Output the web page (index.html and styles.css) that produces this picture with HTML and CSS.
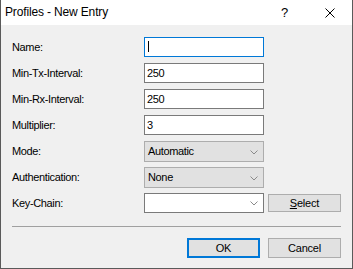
FILE: index.html
```html
<!DOCTYPE html>
<html lang="en">

<head>
  <title>Profiles - New Entry</title>
  <meta charset="utf-8">
  <link rel="stylesheet" href="styles.css">
</head>

<body>
  <div class="window">
    <div class="titlebar">
      <span class="title">Profiles - New Entry</span>
      <span class="capbtn help">?</span>
      <span class="capbtn close">
        <svg width="10" height="10" viewBox="0 0 10 10">
          <path d="M0.5 0.5 L9.5 9.5 M9.5 0.5 L0.5 9.5" stroke="#000" stroke-width="1" fill="none" />
        </svg>
      </span>
    </div>
    <div class="form">
      <label class="lbl">Name:</label>
      <div class="edit focused"><span class="caret"></span></div>
      <span></span>

      <label class="lbl">Min-Tx-Interval:</label>
      <div class="edit">250</div>
      <span></span>

      <label class="lbl">Min-Rx-Interval:</label>
      <div class="edit">250</div>
      <span></span>

      <label class="lbl">Multiplier:</label>
      <div class="edit">3</div>
      <span></span>

      <label class="lbl">Mode:</label>
      <div class="combo">
        <span>Automatic</span>
        <svg class="chev" width="8" height="5" viewBox="0 0 8 5">
          <path d="M0.5 0.5 L4 4 L7.5 0.5" stroke="#8a8a8a" stroke-width="1" fill="none" />
        </svg>
      </div>
      <span></span>

      <label class="lbl">Authentication:</label>
      <div class="combo">
        <span>None</span>
        <svg class="chev" width="8" height="5" viewBox="0 0 8 5">
          <path d="M0.5 0.5 L4 4 L7.5 0.5" stroke="#8a8a8a" stroke-width="1" fill="none" />
        </svg>
      </div>
      <span></span>

      <label class="lbl">Key-Chain:</label>
      <div class="combo editable">
        <span></span>
        <svg class="chev" width="8" height="5" viewBox="0 0 8 5">
          <path d="M0.5 0.5 L4 4 L7.5 0.5" stroke="#8a8a8a" stroke-width="1" fill="none" />
        </svg>
      </div>
      <button class="btn small"><u>S</u>elect</button>
    </div>
    <div class="sep"></div>
    <div class="footer">
      <button class="btn default">OK</button>
      <button class="btn">Cancel</button>
    </div>
  </div>
</body>

</html>
```
FILE: styles.css
```css
* {
  box-sizing: border-box;
}

body {
  margin: 0;
  font-family: "Liberation Sans", Arial, sans-serif;
  font-size: 11px;
  color: #000;
}

.window {
  width: 353px;
  height: 269px;
  display: flex;
  flex-direction: column;
  background-color: #f0f0f0;
  border: 1px solid #5a5a5a;
  border-top: none;
}

.titlebar {
  height: 25px;
  display: flex;
  align-items: center;
  background-color: #fff;
}

.title {
  flex: 1;
  padding-left: 4px;
  font-size: 12px;
  letter-spacing: -0.15px;
  padding-bottom: 1px;
}

.capbtn {
  width: 45px;
  height: 25px;
  display: flex;
  align-items: center;
  justify-content: center;
}

.help {
  font-size: 13px;
  padding-bottom: 1px;
}

/* label / control / button grid */
.form {
  display: grid;
  grid-template-columns: 128px 120px 73px;
  grid-auto-rows: 20px;
  column-gap: 4px;
  row-gap: 6px;
  padding: 12px 11px 0 11px;
  letter-spacing: -0.35px;
}

.lbl {
  display: flex;
  align-items: center;
  padding-bottom: 1px;
}

.edit {
  display: flex;
  align-items: center;
  height: 20px;
  padding: 0 0 1px 2px;
  background-color: #fff;
  border: 1px solid #7a7a7a;
}

.edit.focused {
  border-color: #0078d7;
}

.caret {
  width: 1px;
  height: 11px;
  margin-left: 1px;
  background-color: #000;
}

.combo {
  display: flex;
  align-items: center;
  justify-content: space-between;
  height: 21px;
  padding: 0 5px 1px 3px;
  background-color: #e1e1e1;
  border: 1px solid #adadad;
}

.combo.editable {
  background-color: #fff;
  border-color: #7a7a7a;
  height: 20px;
}

.chev {
  margin-top: 2px;
}

.btn {
  height: 20px;
  width: 73px;
  padding: 0 0 1px 0;
  font-family: "Liberation Sans", Arial, sans-serif;
  font-size: 11px;
  letter-spacing: -0.2px;
  color: #000;
  background-color: #e1e1e1;
  border: 1px solid #adadad;
}

.btn.small {
  height: 18px;
  align-self: center;
}

.btn.default {
  border: 2px solid #0078d7;
}

.sep {
  height: 1px;
  margin: 13px 11px 0 11px;
  background-color: #a0a0a0;
}

.footer {
  display: flex;
  justify-content: flex-end;
  gap: 8px;
  padding: 11px 11px 0 0;
}
```
